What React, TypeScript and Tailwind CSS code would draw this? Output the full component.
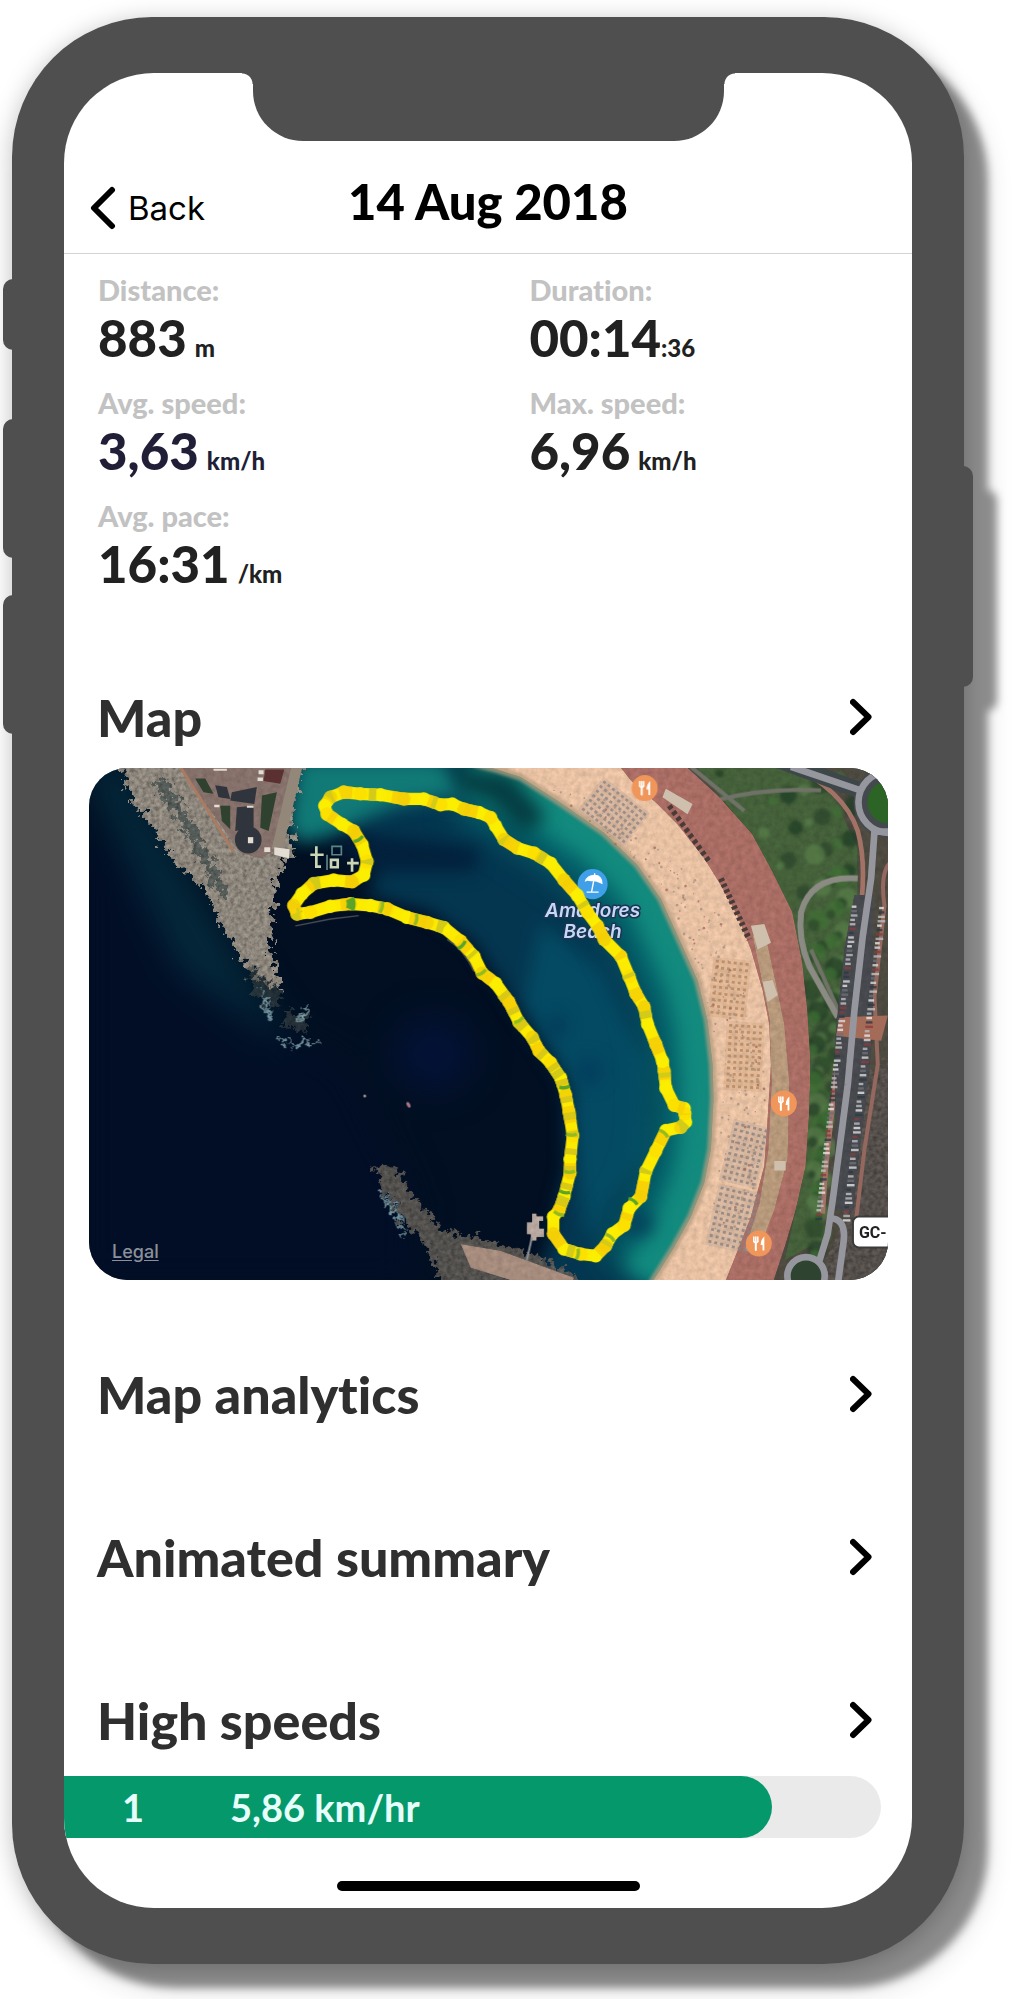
import type { ReactNode } from "react";

type Stat = { label: string; value: string; unit: string; spaced: boolean; tone: string };

const stats: Stat[] = [
  { label: "Distance:", value: "883", unit: "m", spaced: true, tone: "text-[#212121]" },
  { label: "Duration:", value: "00:14", unit: ":36", spaced: false, tone: "text-[#212121]" },
  { label: "Avg. speed:", value: "3,63", unit: "km/h", spaced: true, tone: "text-[#211f38]" },
  { label: "Max. speed:", value: "6,96", unit: "km/h", spaced: true, tone: "text-[#212121]" },
  { label: "Avg. pace:", value: "16:31", unit: "/km", spaced: true, tone: "text-[#212121]" },
];

const speeds = [{ rank: 1, speed: "5,86 km/hr", share: 86.7 }];

function Chevron() {
  return (
    <svg viewBox="0 0 22 38" className="h-[38px] w-[22px]" fill="none" stroke="#000" strokeWidth="6" strokeLinecap="round" strokeLinejoin="round" aria-hidden="true">
      <path d="M3 4 18.500 19 3 34" />
    </svg>
  );
}

function SectionLink({ children }: { children: ReactNode }) {
  return (
    <h2 className="text-[52px] leading-[64px] font-black text-[#2f2f2f]">
      <a href="#section" className="flex items-center justify-between pr-10 pl-[33px]">
        <span>{children}</span>
        <Chevron />
      </a>
    </h2>
  );
}

const WATERLINE =
  "M1180 10 L1250 28 L1320 50 L1430 120 L1570 215 L1670 310 L1740 410 L1800 540 L1850 650 L1880 770 L1895 900 L1898 1000 L1890 1150 L1870 1250 L1830 1350 L1780 1440 L1710 1550";
const SAND_EDGE =
  "1930 1550 L1970 1450 L2010 1350 L2050 1200 L2060 1060 L2070 900 L2065 780 L2045 680 L2010 560 L1970 460 L1920 370 L1870 290 L1790 190 L1730 130 L1650 60 L1610 10";
const PROMENADE =
  "M1600 10 L1650 60 L1730 130 L1790 190 L1870 290 L1920 370 L1970 460 L2010 560 L2045 680 L2065 780 L2070 900 L2060 1060 L2050 1200 L2010 1350 L1970 1450 L1930 1550 L2070 1550 L2110 1430 L2140 1330 L2170 1200 L2180 1050 L2185 900 L2175 740 L2160 600 L2130 450 L2070 330 L2010 220 L1910 110 L1800 10 Z";
const MAIN_ROAD = "M2380 210 L2370 350 L2345 520 L2320 740 L2300 960 L2275 1150 L2255 1300 L2240 1400 L2215 1480";

const ROUTE_POINTS: [number, number][] = [
  [1810, 1030], [1780, 1020], [1755, 970], [1750, 920], [1745, 890], [1725, 840], [1700, 780], [1690, 730], [1665, 690],
  [1645, 640], [1620, 580], [1570, 530], [1550, 490], [1520, 450], [1490, 400], [1450, 355], [1410, 305], [1360, 275],
  [1310, 260], [1270, 235], [1245, 195], [1230, 170], [1195, 155], [1150, 145], [1115, 130], [1080, 132], [1030, 115],
  [970, 115], [900, 103], [840, 100], [790, 95], [750, 110], [733, 135], [740, 160], [785, 190], [820, 210], [845, 250],
  [860, 300], [850, 340], [815, 360], [760, 355], [700, 365], [665, 395], [640, 430], [650, 455], [690, 450], [750, 432],
  [810, 425], [870, 430], [920, 440], [980, 465], [1040, 480], [1090, 495], [1140, 535], [1180, 580], [1205, 630],
  [1245, 660], [1285, 715], [1315, 775], [1355, 820], [1375, 860], [1410, 895], [1440, 940], [1455, 990], [1465, 1040],
  [1476, 1110], [1468, 1180], [1468, 1220], [1450, 1290], [1435, 1330], [1418, 1350], [1418, 1400], [1450, 1445],
  [1500, 1460], [1545, 1465], [1575, 1435], [1595, 1400], [1630, 1375], [1645, 1325], [1680, 1290], [1695, 1215],
  [1725, 1155], [1755, 1095], [1800, 1085], [1814, 1070], [1812, 1045],
];
const ROUTE = "M" + ROUTE_POINTS.map(([x, y]) => `${x} ${y}`).join(" L");

const GREEN_MARKS: [number, number, number][] = [
  [812, 425, 0], [905, 436, 15], [1008, 472, 10], [1145, 548, 45], [1203, 630, 60], [1315, 770, 60],
  [1452, 968, 85], [1472, 1108, 90], [1466, 1218, 90], [1452, 1278, 100], [1434, 1342, 110],
  [1492, 1460, 10], [1658, 1302, -55], [1750, 1102, -50], [1590, 1410, -50], [835, 235, 60],
];

// Rows of beach umbrellas: x, y, columns, rows, step x, step y, tilt, colour.
const UMBRELLAS: [number, number, number, number, number, number, number, string][] = [
  [1570, 60, 10, 7, 17, 17, 38, "#8f8685"],
  [1905, 590, 6, 9, 18, 19, 6, "#b5895f"],
  [1945, 780, 6, 11, 18, 18, 3, "#b5895f"],
  [1965, 1070, 6, 10, 18, 18, 14, "#8a8383"],
  [1920, 1260, 7, 10, 18, 18, 13, "#8a8383"],
];

const CAR_COLOURS = ["#e8e8ea", "#b9bcc4", "#8a3c3c", "#d9dadd", "#6d7078", "#c9c4c2", "#2f3945"];

const SCATTER = Array.from({ length: 230 }, (_, i) => {
  const t = ((i * 61) % 230) / 230;
  const y = 90 + t * 1300;
  const edge = y < 400 ? 1400 + (y - 90) * 1.1 : y < 900 ? 1745 + (y - 400) * 0.32 : 1905 - Math.max(0, y - 1050) * 0.12;
  return { x: edge + 20 + ((i * i * 37) % 131), y, r: 2 + (i % 3), c: i % 4 === 0 ? "#a76b5d" : "#a8917f" };
});

const SHRUBS = Array.from({ length: 90 }, (_, i) => {
  const y = 40 + ((i * 53) % 90) * 16;
  const left = y < 400 ? 1890 + y * 0.65 : 2190;
  const right = y < 400 ? 2330 : 2300 - (y - 400) * 0.07;
  return { x: left + (((i * 29) % 50) / 50) * (right - left), y, r: 12 + ((i * 7) % 22), c: ["#1f3b22", "#3f7035", "#2b452a", "#587f4a"][i % 4] };
});

function Restaurant({ x, y }: { x: number; y: number }) {
  return (
    <g transform={`translate(${x} ${y})`}>
      <circle r="13" fill="#f0965a" />
      <g fill="none" stroke="#fff" strokeWidth="1.500" strokeLinecap="round">
        <path d="M-5-6.500v4.500M-3-6.500v5M-1-6.500v4.500" />
        <path d="M-5-2q2 2.500 4 0" />
        <path d="M-3-.5v7" strokeWidth="2" />
      </g>
      <path d="M5.500-7v14h-1.800v-5.500H1.800Q1.800-4 5.500-7Z" fill="#fff" />
    </g>
  );
}

function SatelliteMap() {
  return (
    <svg viewBox="0 0 798 511" className="block w-full" role="img" aria-label="Swim route around Amadores Beach">
      <defs>
        <filter id="b12" x="-30%" y="-30%" width="160%" height="160%"><feGaussianBlur stdDeviation="5" /></filter>
        <filter id="b25" x="-40%" y="-40%" width="180%" height="180%" colorInterpolationFilters="sRGB"><feGaussianBlur stdDeviation="26" /></filter>
        <filter id="b50" x="-60%" y="-60%" width="220%" height="220%" colorInterpolationFilters="sRGB"><feGaussianBlur stdDeviation="52" /></filter>
        <filter id="rock" x="-10%" y="-10%" width="120%" height="120%">
          <feTurbulence type="fractalNoise" baseFrequency="0.05" numOctaves="4" seed="4" result="n" />
          <feDisplacementMap in="SourceGraphic" in2="n" scale="70" xChannelSelector="R" yChannelSelector="G" result="d" />
          <feTurbulence type="fractalNoise" baseFrequency="0.08" numOctaves="4" seed="9" />
          <feColorMatrix values="1.500 0 0 0 -.25  1.500 0 0 0 -.25  1.500 0 0 0 -.25  0 0 0 0 1" result="g" />
          <feComposite in="d" in2="g" operator="arithmetic" k1="0.900" k2="0.550" result="m" />
          <feComposite in="m" in2="d" operator="in" result="o" />
          <feGaussianBlur in="o" stdDeviation="2" />
        </filter>
        <filter id="grain" x="0" y="0" width="100%" height="100%">
          <feTurbulence type="fractalNoise" baseFrequency="0.06" numOctaves="4" seed="12" />
          <feColorMatrix values="1.200 0 0 0 -.1  1.200 0 0 0 -.1  1.200 0 0 0 -.1  0 0 0 0 1" result="g" />
          <feComposite in="SourceGraphic" in2="g" operator="arithmetic" k1="0.400" k2="0.800" result="m" />
          <feComposite in="m" in2="SourceGraphic" operator="in" result="o" />
          <feGaussianBlur in="o" stdDeviation="1.500" />
        </filter>
      </defs>

      <g transform="translate(-9 -8) scale(.3334 .338)">
        <rect x="0" y="0" width="2450" height="1560" fill="#020f22" />
        <g filter="url(#b50)">
          <path d="M0 200 L300 380 L520 760 L800 900 L1000 1300 L1000 1560 L0 1560Z" fill="#010e26" />
          <path d="M0 0 L120 0 L420 500 L640 860 L300 620Z" fill="#04293b" />
          <ellipse cx="1060" cy="870" rx="120" ry="110" fill="#031236" />
        </g>
        <g filter="url(#b25)">
          <path d="M655 -20 L1250 -20 L1640 300 L1880 700 L1890 1200 L1700 1600 L1330 1600 L1400 1450 L1460 1200 L1455 950 L1300 720 L1180 540 L1050 450 L860 400 L900 300 L840 210 L640 230Z" fill="#043650" />
          <path d="M1380 480 L1560 620 L1700 900 L1700 1150 L1520 1420 L1490 1200 L1480 980 L1330 720Z" fill="#044a63" />
        </g>
        <path d={WATERLINE} fill="none" stroke="#05686d" strokeWidth="350" filter="url(#b50)" />
        <path d={WATERLINE} fill="none" stroke="#128a7e" strokeWidth="190" filter="url(#b25)" />
        <path d="M655 0 L1080 0 L1160 100 L960 130 L860 170 L760 220 L660 240 L625 200Z" fill="#117a76" filter="url(#b25)" />
        <g filter="url(#b25)">
          <path d="M1110 20 L1290 40 L1400 170 L1330 220 L1240 130 L1140 90Z" fill="#043c42" />
          <path d="M740 240 L900 220 L1200 260 L1180 330 L900 330Z" fill="#02203c" />
          <ellipse cx="1430" cy="785" rx="22" ry="28" fill="#033052" />
          <ellipse cx="1670" cy="1370" rx="50" ry="38" fill="#04405a" />
          <ellipse cx="1525" cy="920" rx="35" ry="35" fill="#033a5c" />
        </g>

        <path d="M1800 0 H2450 V1560 H1990 L2120 1300 L2150 700 L2050 300Z" fill="#4d4a40" filter="url(#grain)" />
        <path d="M1850 24 L2140 24 L2260 110 L2330 260 L2330 430 L2290 720 L2250 960 L2230 1240 L2200 1430 L2110 1480 L2150 1300 L2180 1000 L2170 650 L2090 370 L1960 160Z" fill="#44603a" filter="url(#grain)" />
        <g filter="url(#b12)">
          {SHRUBS.map((s, i) => <circle key={i} cx={s.x} cy={s.y} r={s.r} fill={s.c} opacity="0.7" />)}
        </g>
        <path d="M1900 120 Q2060 80 2220 90 M1830 20 L1990 150 M2190 560 L2290 780" fill="none" stroke="#707268" strokeWidth="12" />
        <path d="M2330 350 Q2190 340 2160 450 Q2150 530 2185 610 L2270 760" fill="none" stroke="#8b8b84" strokeWidth="18" />
        <path d="M2340 950 L2430 880 V1560 H2200 L2280 1380Z" fill="#55504c" filter="url(#rock)" />

        <path d={PROMENADE} fill="#a96d64" stroke="#a96d64" strokeWidth="8" filter="url(#grain)" />
        <path d={`${WATERLINE} L${SAND_EDGE}Z`} fill="#e8c1a3" filter="url(#grain)" />
        <path d={WATERLINE} fill="none" stroke="#b59b7e" strokeWidth="22" opacity="0.75" filter="url(#b12)" />
        <path d="M2015 520 L2050 500 L2085 660 L2110 780 L2125 950 L2120 1180 L2080 1330 L2030 1460 L1990 1450 L2035 1310 L2062 1150 L2072 950 L2065 760Z" fill="#b6987a" filter="url(#grain)" />
        <g fill="#cfc0ad">
          <path d="M2010 490 L2050 485 L2070 540 L2030 560Z M2045 655 L2075 650 L2090 695 L2060 715Z M1755 85 L1835 130 L1820 160 L1745 110Z" />
          <rect x="2080" y="1185" width="34" height="28" />
        </g>
        <path d="M1765 135 L1885 300" stroke="#4a3b38" strokeWidth="16" strokeDasharray="12 9" fill="none" />
        <path d="M1920 350 L2005 530" stroke="#4a3b38" strokeWidth="18" strokeDasharray="10 8" fill="none" />
        {UMBRELLAS.map(([x, y, cols, rows, dx, dy, tilt, colour], i) => (
          <g key={i} transform={`rotate(${tilt} ${x} ${y})`} fill={colour} opacity="0.85">
            <rect x={x - 8} y={y - 8} width={cols * dx + 6} height={rows * dy + 6} opacity="0.22" />
            {Array.from({ length: cols * rows }, (_, k) => (
              <rect key={k} x={x + (k % cols) * dx} y={y + Math.floor(k / cols) * dy} width="9" height="8" />
            ))}
          </g>
        ))}
        {SCATTER.map((s, i) => <circle key={i} cx={s.x} cy={s.y} r={s.r} fill={s.c} opacity="0.8" />)}

        <path d="M2120 10 Q2290 90 2330 210 Q2355 300 2340 430 L2300 700 L2262 960 L2235 1200 L2225 1340" fill="none" stroke="#a37267" strokeWidth="14" />
        <path d="M2430 300 Q2395 330 2410 430 L2380 700 L2390 900 L2350 1150 L2320 1400" fill="none" stroke="#94685e" strokeWidth="12" />
        <path d="M2375 400 L2345 560 L2325 740 L2305 960 L2280 1150 L2262 1330" fill="none" stroke="#46494e" strokeWidth="110" filter="url(#grain)" />
        <path d="M2275 760 L2420 755 L2400 830 L2265 815Z" fill="#a56b59" />
        {Array.from({ length: 72 }, (_, i) => {
          const y = 430 + i * 13;
          const mid = 2362 - (y - 430) * 0.118;
          return (
            <g key={i} opacity="0.8">
              <rect x={mid - 50} y={y} width={14 + (i % 3) * 3} height="7" fill={CAR_COLOURS[(i * 3 + (i % 4)) % 7]} />
              <rect x={mid + 32} y={y + 4} width={14 + (i % 4) * 3} height="7" fill={CAR_COLOURS[(i * 5 + (i % 3)) % 7]} />
            </g>
          );
        })}
        <path d="M2090 0 L2350 95" stroke="#3d4749" strokeWidth="48" fill="none" />
        <circle cx="2422" cy="125" r="84" fill="#2c6426" stroke="#44494e" strokeWidth="42" />
        <g fill="none" stroke="#96979e" strokeWidth="20">
          <path d="M2130 20 L2345 92" />
          <circle cx="2422" cy="125" r="90" />
          <path d={MAIN_ROAD} />
          <path d="M2380 212 H2430 M2240 1355 Q2295 1350 2288 1420 L2270 1550" />
          <circle cx="2175" cy="1525" r="56" fill="#2e4430" />
        </g>

        <path d="M120 0 L150 110 L220 200 L270 290 L320 330 L380 400 L425 490 L500 620 L560 660 L610 680 L565 560 L580 450 L590 340 L640 270 L630 190 L665 0Z" fill="#8c857b" filter="url(#rock)" />
        <path d="M235 60 L330 200 L400 340 L440 400" fill="none" stroke="#1b3036" strokeWidth="34" opacity="0.5" filter="url(#rock)" />
        <path d="M500 600 L560 650 L610 680 L580 740 L520 690Z M620 740 L690 750 L680 800 L600 790Z" fill="#3b4342" opacity="0.6" filter="url(#rock)" />
        <path d="M300 20 L650 20 L625 150 L600 260 L540 290 L480 275Z" fill="#85706a" filter="url(#grain)" />
        <path d="M300 20 L460 270" stroke="#a97b62" strokeWidth="9" fill="none" />
        <path d="M650 20 L590 265" stroke="#93877a" strokeWidth="32" fill="none" />
        <g fill="#30343d">
          <path d="M455 95 L530 80 L522 130 L450 120Z M470 140 L520 135 L520 200 L465 210Z M405 75 L440 80 L450 115 L415 110Z" />
          <circle cx="504" cy="236" r="40" />
        </g>
        <path d="M545 105 L590 95 L565 210 L540 200Z M345 55 L375 55 L400 100 L370 95Z M420 135 L450 135 L450 205 L425 180Z" fill="#2f4230" />
        <path d="M555 28 L612 28 L600 70 L550 62Z" fill="#5a3030" />
        <g fill="#e4ddd4">
          <rect x="503" y="228" width="16" height="18" />
          <rect x="552" y="258" width="18" height="14" />
          <path d="M582 258 L628 264 L626 290 L582 280Z" />
          <path d="M535 30 h15 v12 h-15z M532 52 h16 v10 h-16z M402 132 h16 v8 h-16z M500 135 h20 v6 h-20z M400 26 h40 v6 h-40z" />
        </g>

        <path d="M880 1200 L950 1200 L1000 1290 L1090 1390 L1230 1420 L1430 1490 L1540 1560 L1080 1560 L1040 1440 L970 1370 L910 1270Z" fill="#625d57" opacity="0.85" filter="url(#rock)" />
        <path d="M1140 1430 L1260 1450 L1480 1530 L1470 1560 L1300 1540 L1170 1500Z" fill="#a68c7d" filter="url(#grain)" />
        <g fill="none" stroke="#83a5ad" strokeWidth="11" opacity="0.8" filter="url(#rock)">
          <path d="M550 690 L570 760 M600 820 L640 845 L720 830 M650 760 L690 740" />
          <path d="M900 1270 L940 1330 L970 1400" />
        </g>
        <g stroke="#c9d5b5" strokeWidth="8" fill="none">
          <path d="M708 255 v60 h14 M690 280 h40 M815 290 v40 M800 305 h35 M752 295 h20 v22 h-20z" />
          <path d="M755 255 h28 v25 h-28z M740 280 v45" stroke="#5c8583" strokeWidth="5" />
        </g>
        <g fill="#b7a79f">
          <path d="M1338 1366 h16 v-26 h14 v8 h20 v14 h-12 v22 h14 v26 h-22 v10 h-18 v-18 h-12z" filter="url(#grain)" />
          <path d="M1354 1410 L1338 1480" stroke="#8d9296" strokeWidth="6" />
          <circle cx="853" cy="993" r="4" />
          <ellipse cx="984" cy="1019" rx="5" ry="9" fill="#a87888" transform="rotate(-30 984 1019)" />
          <path d="M645 490 L750 470 L835 460 M1100 530 Q1150 560 1180 625" fill="none" stroke="#4a4d52" strokeWidth="4" />
        </g>
      </g>

      <g transform="translate(503 116)">
        <circle r="15" fill="#3f9fe8" />
        <path d="M-8-2.500Q-6-9.500 2-9.500T10 0L6.500-1.500 4-2.500 1-3-2-3-5-3.500Z" fill="#fff" />
        <path d="M2-11v2M1-3l-2 10.500M-6 8H6" stroke="#fff" strokeWidth="1.400" fill="none" />
      </g>
      <g fontFamily="Inter, sans-serif" fontSize="19" fontWeight="600" fontStyle="italic" textAnchor="middle" fill="#c6d8f8" stroke="#1c3450" strokeWidth="3" paintOrder="stroke" strokeLinejoin="round">
        <text x="503" y="149">Amadores</text>
        <text x="503" y="170">Beach</text>
      </g>

      <g transform="translate(-9 -8) scale(.3334 .338)" fill="none" strokeLinejoin="round" strokeLinecap="round">
        <path d={ROUTE} stroke="#fcea00" strokeWidth="36" />
        {ROUTE_POINTS.map(([x, y], i) => (
          <circle key={i} cx={x} cy={y} r="20" fill={["#fcee00", "#fbe000", "#fcee00", "#f4d404"][i % 4]} />
        ))}
        <g strokeLinecap="butt" strokeWidth="37">
          <path d={ROUTE} stroke="#f5cd08" strokeDasharray="38 95 20 60 50 120" strokeDashoffset="20" opacity="0.8" />
          <path d={ROUTE} stroke="#d3cb18" strokeDasharray="14 170 22 110 12 240" strokeDashoffset="-120" />
          <path d="M1265 690 L1285 715 L1315 775 L1355 820 L1375 860 L1410 895 L1440 940 L1455 990 L1465 1040 L1476 1110 L1468 1180 L1468 1220 L1450 1290 L1435 1330" stroke="#d9c916" strokeDasharray="18 34" />
        </g>
        {GREEN_MARKS.map(([x, y, angle], i) => (
          <path key={i} d="M-3 -16 Q4 0 -3 16" transform={`translate(${x} ${y}) rotate(${angle})`} stroke={i % 3 === 0 ? "#5aa528" : "#94ba22"} strokeWidth={i === 0 ? 26 : 10} strokeLinecap="butt" />
        ))}
      </g>

      <Restaurant x={555} y={20} />
      <Restaurant x={694} y={335} />
      <Restaurant x={669} y={475} />

      <rect x="763" y="448" width="60" height="31" rx="6" fill="#fff" stroke="#3b3b3b" strokeWidth="2" />
      <text x="769" y="469" fontFamily="Roboto, sans-serif" fontSize="16" fontWeight="700" fill="#222">GC-</text>
    </svg>
  );
}

export default function App() {
  return (
    <div className="overflow-hidden bg-white pt-[17px] pr-[50px] pb-[35px] pl-3 font-['Lato',sans-serif] [font-variant-ligatures:none]">
      <main className="relative rounded-[140px] bg-[#4f4f4f] px-[52px] py-14 drop-shadow-[24px_24px_4px_rgba(0,0,0,0.45)]">
        <div className="pointer-events-none absolute inset-0 -z-10 rounded-[140px] shadow-[0_4px_24px_rgba(0,0,0,0.25)]" />
        <span className="absolute top-[262px] -left-[9px] h-[71px] w-5 rounded-l-[10px] bg-[#4f4f4f]" />
        <span className="absolute top-[402px] -left-[9px] h-[139px] w-5 rounded-l-[10px] bg-[#4f4f4f]" />
        <span className="absolute top-[578px] -left-[9px] h-[139px] w-5 rounded-l-[10px] bg-[#4f4f4f]" />
        <span className="absolute top-[449px] -right-[9px] h-[221px] w-5 rounded-r-[10px] bg-[#4f4f4f]" />

        <div className="overflow-hidden rounded-[90px] bg-white">
          <div className="flex justify-center">
            <span className="size-[11px] bg-[radial-gradient(circle_at_0_100%,transparent_10px,#4f4f4f_11px)]" />
            <div className="h-[68px] w-[471px] rounded-b-[50px] bg-[#4f4f4f]" />
            <span className="size-[11px] bg-[radial-gradient(circle_at_100%_100%,transparent_10px,#4f4f4f_11px)]" />
          </div>

          <header className="grid grid-cols-[1fr_auto_1fr] items-center border-b border-[#d4d4d4] px-[26px] pt-7 pb-5 text-black">
            <button type="button" className="flex items-center gap-3 pt-[14px] font-['Inter',sans-serif] text-[33px] leading-[48px]">
              <svg viewBox="0 0 26 44" className="h-11 w-[26px]" fill="none" stroke="currentColor" strokeWidth="6" strokeLinecap="round" strokeLinejoin="round" aria-hidden="true">
                <path d="M22 4 4 22 22 40" />
              </svg>
              Back
            </button>
            <h1 className="text-[49px] leading-[64px] font-black">14 Aug 2018</h1>
          </header>

          <dl className="grid grid-cols-[53%_47%] gap-y-[17px] pt-4 pl-[34px]">
            {stats.map((s) => (
              <div key={s.label} className={s.tone}>
                <dt className="text-[29px] leading-[40px] font-black text-[#c2c2c2]">{s.label}</dt>
                <dd className={s.spaced ? "flex items-baseline gap-2 text-[51px] leading-[56px] font-black" : "flex items-baseline text-[51px] leading-[56px] font-black"}>
                  {s.value}
                  <span className="text-[24px] leading-8">{s.unit}</span>
                </dd>
              </div>
            ))}
          </dl>

          <section className="pt-[93px]">
            <SectionLink>Map</SectionLink>
            <div className="relative mt-[19px] mr-6 ml-[25px] overflow-hidden rounded-[38px]">
              <SatelliteMap />
              <a href="#legal" className="absolute bottom-[16px] left-[23px] font-['Inter',sans-serif] text-[18px] leading-6 font-medium text-[#8b909a] underline underline-offset-2">
                Legal
              </a>
            </div>
          </section>

          <section className="pt-[82px]"><SectionLink>Map analytics</SectionLink></section>
          <section className="pt-[99px]"><SectionLink>Animated summary</SectionLink></section>
          <section className="pt-[99px]">
            <SectionLink>High speeds</SectionLink>
            <ol className="pt-6 pr-[31px]">
              {speeds.map((s) => (
                <li key={s.rank} className="rounded-r-full bg-[#eaeaea]">
                  <div className="flex h-[62px] items-center rounded-r-full bg-[#05986b] pl-[58px] text-[38px] leading-none font-bold text-[#e6fffb]" style={{ width: `${s.share}%` }}>
                    <span className="w-[108px]">{s.rank}</span>
                    <span>{s.speed}</span>
                  </div>
                </li>
              ))}
            </ol>
          </section>

          <div className="flex justify-center pt-[43px] pb-[17px]">
            <div className="h-[10px] w-[303px] rounded-full bg-black" />
          </div>
        </div>
      </main>
    </div>
  );
}
